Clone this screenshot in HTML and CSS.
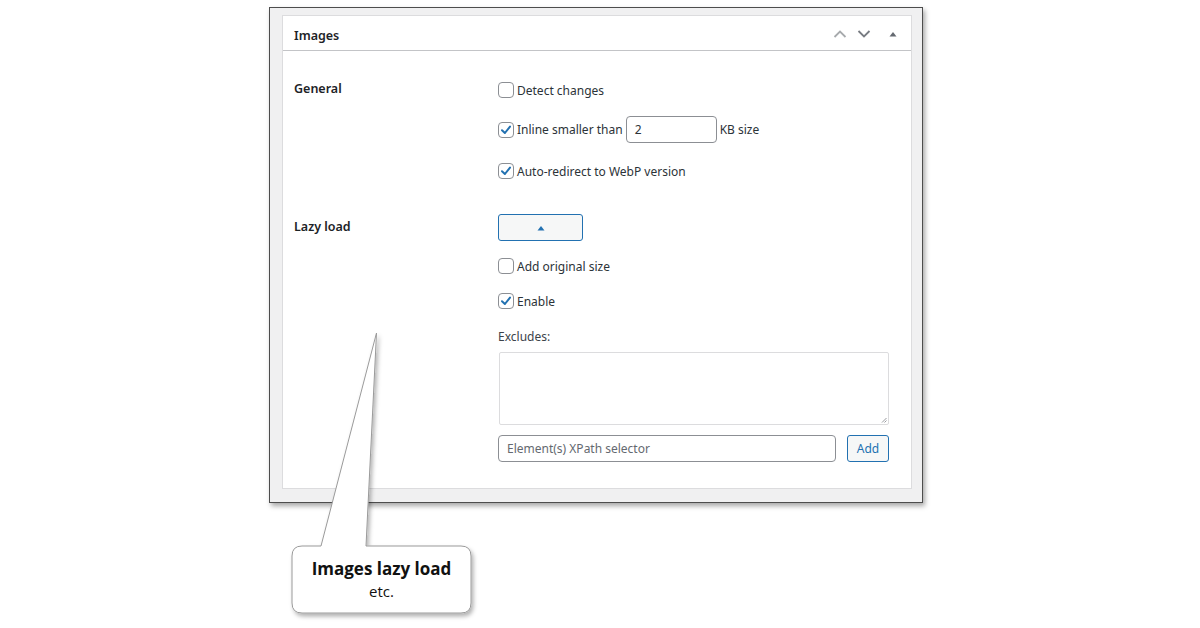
FILE: index.html
```html
<!DOCTYPE html>
<html lang="en">
<head>
<meta charset="utf-8">
<title>Images settings</title>
<link rel="stylesheet" href="styles.css">
</head>
<body>
<div class="frame">
  <div class="panel">
    <div class="panel-head">
      <h2 class="panel-title">Images</h2>
      <div class="head-actions">
        <svg class="hicon hicon-up" width="14" height="10" viewBox="0 0 14 10"><path d="M1.5 8 L7 2.5 L12.5 8" fill="none" stroke="#a7aaad" stroke-width="1.8"/></svg>
        <svg class="hicon hicon-down" width="14" height="10" viewBox="0 0 14 10"><path d="M1.5 2 L7 7.5 L12.5 2" fill="none" stroke="#787c82" stroke-width="1.8"/></svg>
        <svg class="hicon hicon-tri" width="8" height="6" viewBox="0 0 8 6"><path d="M0.5 5.5 L4 1 L7.5 5.5 Z" fill="#646970"/></svg>
      </div>
    </div>
    <div class="panel-body">
      <div class="row row-general">
        <div class="row-label">General</div>
        <div class="row-fields">
          <label class="opt"><span class="cb"></span><span>Detect changes</span></label>
          <div class="opt opt-inline">
            <span class="cb cb-on"><svg width="14" height="14" viewBox="0 0 14 14"><path d="M3 7.2 L5.9 10 L11 3.6" fill="none" stroke="#2271b1" stroke-width="2" stroke-linecap="round" stroke-linejoin="round"/></svg></span>
            <span>Inline smaller than</span>
            <span class="txt txt-small">2</span>
            <span>KB size</span>
          </div>
          <label class="opt opt-third"><span class="cb cb-on"><svg width="14" height="14" viewBox="0 0 14 14"><path d="M3 7.2 L5.9 10 L11 3.6" fill="none" stroke="#2271b1" stroke-width="2" stroke-linecap="round" stroke-linejoin="round"/></svg></span><span>Auto-redirect to WebP version</span></label>
        </div>
      </div>
      <div class="row row-lazy">
        <div class="row-label row-label-lazy">Lazy load</div>
        <div class="row-fields">
          <div class="toggle-btn"><svg width="8" height="6" viewBox="0 0 8 6"><path d="M0.5 5.5 L4 1 L7.5 5.5 Z" fill="#2271b1"/></svg></div>
          <label class="opt opt-gap"><span class="cb"></span><span>Add original size</span></label>
          <label class="opt opt-gap"><span class="cb cb-on"><svg width="14" height="14" viewBox="0 0 14 14"><path d="M3 7.2 L5.9 10 L11 3.6" fill="none" stroke="#2271b1" stroke-width="2" stroke-linecap="round" stroke-linejoin="round"/></svg></span><span>Enable</span></label>
          <div class="excl-label">Excludes:</div>
          <div class="textarea"><svg class="grip" width="6" height="6" viewBox="0 0 6 6"><path d="M5.5 1 L1 5.5 M5.5 3.5 L3.5 5.5" stroke="#8c8f94" stroke-width="0.9"/></svg></div>
          <div class="add-row">
            <span class="txt txt-xpath">Element(s) XPath selector</span>
            <span class="add-btn">Add</span>
          </div>
        </div>
      </div>
    </div>
  </div>
</div>

<div class="callout">
  <svg class="callout-shape" width="1200" height="628" viewBox="0 0 1200 628">
    <defs>
      <filter id="sh" x="-20%" y="-20%" width="140%" height="140%">
        <feDropShadow dx="2" dy="3" stdDeviation="2.2" flood-color="#000" flood-opacity="0.3"/>
      </filter>
    </defs>
    <path d="M302 546 L321 546 L376.5 333 L366 546 L461 546 Q471 546 471 556 L471 603 Q471 613 461 613 L302 613 Q292 613 292 603 L292 556 Q292 546 302 546 Z" fill="#fff" stroke="#9a9a9a" stroke-width="1" filter="url(#sh)"/>
  </svg>
  <div class="callout-text">
    <div class="callout-title">Images lazy load</div>
    <div class="callout-sub">etc.</div>
  </div>
</div>
</body>
</html>
```

FILE: styles.css
```css
html, body {
  margin: 0;
  padding: 0;
  background: #ffffff;
}
body {
  font-family: "Noto Sans", "Open Sans", "DejaVu Sans", sans-serif;
  font-size: 12px;
  color: #2c3338;
  width: 1200px;
  height: 628px;
  overflow: hidden;
  position: relative;
}
.frame {
  margin: 7px 0 0 269px;
  width: 654px;
  height: 496px;
  box-sizing: border-box;
  border: 1px solid #4d4d4d;
  background: #f0f0f1;
  padding: 7px 10px 13px 12px;
  box-shadow: 2px 3px 5px rgba(0, 0, 0, 0.35);
}
.panel {
  height: 100%;
  box-sizing: border-box;
  background: #fff;
  border: 1px solid #dcdcde;
}
.panel-head {
  height: 35px;
  box-sizing: border-box;
  border-bottom: 1px solid #c3c4c7;
  display: flex;
  align-items: center;
  justify-content: space-between;
  padding: 1px 14px 0 11px;
}
.panel-title {
  margin: 3px 0 0 0;
  font-size: 12.5px;
  font-weight: 600;
  color: #1d2327;
}
.head-actions {
  display: flex;
  align-items: center;
  gap: 10px;
}
.hicon-tri {
  margin-left: 8px;
}
.panel-body {
  padding: 29px 22px 0 11px;
}
.row {
  display: flex;
}
.row-label {
  width: 204px;
  flex: none;
  font-weight: 600;
  font-size: 12.5px;
  color: #1d2327;
  line-height: 20px;
  margin-top: -1px;
}
.row-label-lazy {
  line-height: 27px;
}
.row-fields {
  width: 391px;
  display: flex;
  flex-direction: column;
}
.row-lazy {
  margin-top: 33px;
}
.opt {
  display: flex;
  align-items: center;
  height: 20px;
  gap: 3px;
}
.opt-inline {
  height: 27px;
  margin-top: 16px;
}
.opt-third {
  margin-top: 18px;
}
.opt-gap {
  margin-top: 15px;
}
.cb {
  width: 16px;
  height: 16px;
  box-sizing: border-box;
  border: 1px solid #8c8f94;
  border-radius: 4px;
  background: #fff;
  display: flex;
  align-items: center;
  justify-content: center;
  flex: none;
}
.txt {
  box-sizing: border-box;
  height: 27px;
  border: 1px solid #8c8f94;
  border-radius: 4px;
  background: #fff;
  display: flex;
  align-items: center;
  padding: 0 8px;
  color: #2c3338;
}
.txt-small {
  width: 91px;
}
.toggle-btn {
  width: 85px;
  height: 27px;
  box-sizing: border-box;
  border: 1px solid #2271b1;
  border-radius: 3px;
  background: #f6f7f7;
  display: flex;
  align-items: center;
  justify-content: center;
}
.excl-label {
  margin-top: 16px;
  height: 20px;
  line-height: 20px;
  color: #3c434a;
}
.textarea {
  margin-top: 5px;
  margin-left: 1px;
  height: 73px;
  box-sizing: border-box;
  border: 1px solid #dcdcde;
  border-radius: 2px;
  background: #fff;
  position: relative;
}
.grip {
  position: absolute;
  right: 1px;
  bottom: 1px;
}
.add-row {
  margin-top: 10px;
  display: flex;
  gap: 11px;
}
.txt-xpath {
  flex: 1;
  color: #646970;
}
.add-btn {
  width: 42px;
  height: 27px;
  box-sizing: border-box;
  border: 1px solid #2271b1;
  border-radius: 3px;
  background: #f6f7f7;
  color: #2271b1;
  display: flex;
  align-items: center;
  justify-content: center;
}
.callout-shape {
  position: absolute;
  left: 0;
  top: 0;
  pointer-events: none;
}
.callout-text {
  position: absolute;
  left: 292px;
  top: 557px;
  width: 179px;
  text-align: center;
  font-family: "Open Sans", "Noto Sans", sans-serif;
  color: #111;
}
.callout-title {
  font-size: 17px;
  font-weight: 700;
  line-height: 24px;
}
.callout-sub {
  font-size: 15px;
  line-height: 20px;
}
```
